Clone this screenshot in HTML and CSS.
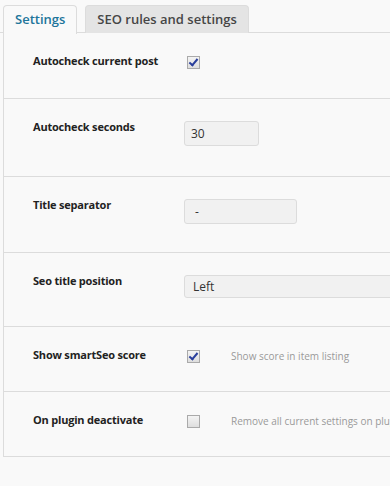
FILE: index.html
```html
<!DOCTYPE html>
<html lang="en">
<head>
    <meta charset="UTF-8">
    <meta name="viewport" content="width=device-width, initial-scale=1.0">
    <title>smartSeo settings</title>
    <link rel="stylesheet" href="styles.css">
</head>

<body>
    <div class="tabs">
        <span class="tab active">Settings</span>
        <span class="tab">SEO rules and settings</span>
    </div>

    <div class="panel">
        <div class="row row-first">
            <div class="label">Autocheck current post</div>
            <div class="field"><span class="check checked"></span></div>
        </div>

        <div class="row row-tall">
            <div class="label">Autocheck seconds</div>
            <div class="field"><span class="input short">30</span></div>
        </div>

        <div class="row">
            <div class="label">Title separator</div>
            <div class="field"><span class="input medium">-</span></div>
        </div>

        <div class="row">
            <div class="label">Seo title position</div>
            <div class="field"><span class="input select">Left</span></div>
        </div>

        <div class="row">
            <div class="label">Show smartSeo score</div>
            <div class="field">
                <span class="check checked"></span>
                <span class="desc">Show score in item listing</span>
            </div>
        </div>

        <div class="row">
            <div class="label">On plugin deactivate</div>
            <div class="field">
                <span class="check"></span>
                <span class="desc">Remove all current settings on plugin deactivate</span>
            </div>
        </div>
    </div>
</body>
</html>
```

FILE: styles.css
```css
body {
    font-family: "Open Sans", Arial, sans-serif;
    margin: 0;
    padding: 0;
    background-color: #f9f9f9;
    color: #222;
    overflow: hidden;
}

.tabs {
    display: flex;
    gap: 8px;
    padding: 5px 0 0 3px;
    border-bottom: 1px solid #dcdcdc;
    height: 27px;
}

.tab {
    display: block;
    height: 27px;
    line-height: 27px;
    padding: 0 11px;
    font-size: 13px;
    font-weight: 600;
    color: #464646;
    background: #e4e4e4;
    border: 1px solid #dcdcdc;
    border-bottom: none;
    border-radius: 4px 4px 0 0;
    white-space: nowrap;
}

    .tab.active {
        color: #21759b;
        background: #f9f9f9;
        height: 28px;
        margin-bottom: -1px;
    }

.panel {
    margin-left: 3px;
    border-left: 1px solid #dcdcdc;
    border-bottom: 1px solid #dcdcdc;
    width: 420px;
}

.row {
    display: flex;
    border-top: 1px solid #dcdcdc;
    padding-bottom: 28px;
}

    .row-first {
        border-top: none;
        padding-bottom: 29px;
    }

    .row-tall {
        padding-bottom: 30px;
    }

.label {
    width: 180px;
    flex: none;
    padding: 20px 0 0 29px;
    box-sizing: border-box;
    font-size: 11px;
    font-weight: 700;
    letter-spacing: -0.2px;
    line-height: 16px;
    white-space: nowrap;
}

.field {
    display: flex;
    align-items: center;
    padding-top: 22px;
}

.input {
    display: block;
    box-sizing: border-box;
    height: 25px;
    line-height: 23px;
    padding: 0 6px;
    font-size: 12px;
    color: #333;
    background: #f1f1f1;
    border: 1px solid #dcdcdc;
    border-radius: 3px;
}

    .input.short {
        width: 75px;
    }

    .input.medium {
        width: 113px;
        padding-left: 10px;
    }

    .input.select {
        width: 240px;
        height: 23px;
        line-height: 21px;
        padding-left: 8px;
        border-radius: 3px 0 0 3px;
    }

.check {
    display: block;
    position: relative;
    width: 11px;
    height: 11px;
    margin-left: 3px;
    border: 1px solid #aaa;
    background: linear-gradient(#f4f4f4, #dedede);
}

    .check.checked::after {
        content: "";
        position: absolute;
        left: 3px;
        top: 0;
        width: 3px;
        height: 7px;
        border: solid #2a3f9c;
        border-width: 0 2px 2px 0;
        transform: rotate(40deg);
    }

.desc {
    margin-left: 31px;
    font-size: 10px;
    line-height: 13px;
    color: #999;
    white-space: nowrap;
}
```
